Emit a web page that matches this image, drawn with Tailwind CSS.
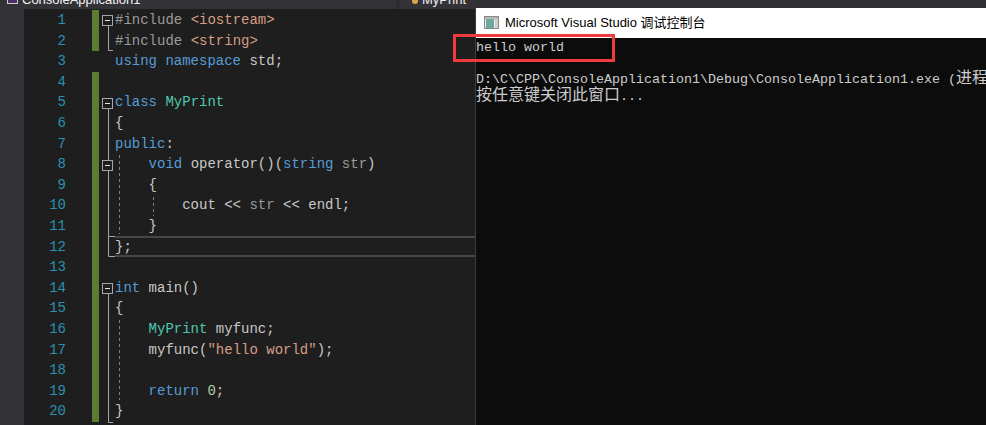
<!DOCTYPE html>
<html lang="zh">
<head>
    <meta charset="UTF-8">
    <title>ConsoleApplication1</title>
    <script src="https://cdn.jsdelivr.net/npm/@tailwindcss/browser@4"></script>
</head>
<body class="bg-[#1e1e1e]">

<div class="w-[986px] h-[425px] overflow-hidden flex bg-[#2f2f32] font-['Liberation_Mono','Noto_Sans_CJK_SC',monospace]">

    <!-- editor -->
    <div class="w-[476px] shrink-0 flex flex-col">
        <!-- cut off combo boxes -->
        <div class="h-[9px] shrink-0 flex overflow-hidden bg-[#2d2d30] text-[#f1f1f1] text-[13px] leading-[16px] font-['Liberation_Sans',sans-serif]">
            <div class="w-[396px] shrink-0 bg-[#333337] pl-[22px] relative">
                <div class="-mt-[8px]">ConsoleApplication1</div>
                <div class="absolute left-[7px] top-0 w-[11px] h-[4px] bg-[#5c2d91]/60 border-b border-x border-[#ccc]"></div>
            </div>
            <div class="w-[4px] shrink-0"></div>
            <div class="flex-1 bg-[#333337] pl-[22px] relative">
                <div class="-mt-[8px]">MyPrint</div>
                <div class="absolute left-[12px] top-0 w-[6px] h-[4px] bg-[#d9a64a] rounded-b-sm"></div>
            </div>
        </div>

        <div class="flex-1 flex min-h-0">
            <div class="w-[24px] shrink-0 bg-[#333337]"></div>

            <div class="flex-1 bg-[#1e1e1e] border-r border-[#3c3c3c] relative text-[14px] leading-[20.6px] pt-[1px]">
                <div class="h-[20.6px] flex"><div class="w-[42px] text-right text-[#2b91af]">1</div><div class="w-[26px] shrink-0"></div><div class="w-[7px] bg-[#5b7d2f] shrink-0"></div><div class="pl-[16px] whitespace-pre"><span class="text-[#9b9b9b]">#include </span><span class="text-[#d69d85]">&lt;iostream&gt;</span></div></div>
                <div class="h-[20.6px] flex"><div class="w-[42px] text-right text-[#2b91af]">2</div><div class="w-[26px] shrink-0"></div><div class="w-[7px] bg-[#5b7d2f] shrink-0"></div><div class="pl-[16px] whitespace-pre"><span class="text-[#9b9b9b]">#include </span><span class="text-[#d69d85]">&lt;string&gt;</span></div></div>
                <div class="h-[20.6px] flex"><div class="w-[42px] text-right text-[#2b91af]">3</div><div class="w-[26px] shrink-0"></div><div class="w-[7px] shrink-0"></div><div class="pl-[16px] whitespace-pre"><span class="text-[#569cd6]">using namespace </span><span class="text-[#c8c8c8]">std;</span></div></div>
                <div class="h-[20.6px] flex"><div class="w-[42px] text-right text-[#2b91af]">4</div><div class="w-[26px] shrink-0"></div><div class="w-[7px] bg-[#5b7d2f] shrink-0"></div></div>
                <div class="h-[20.6px] flex"><div class="w-[42px] text-right text-[#2b91af]">5</div><div class="w-[26px] shrink-0"></div><div class="w-[7px] bg-[#5b7d2f] shrink-0"></div><div class="pl-[16px] whitespace-pre"><span class="text-[#569cd6]">class </span><span class="text-[#4ec9b0]">MyPrint</span></div></div>
                <div class="h-[20.6px] flex"><div class="w-[42px] text-right text-[#2b91af]">6</div><div class="w-[26px] shrink-0"></div><div class="w-[7px] bg-[#5b7d2f] shrink-0"></div><div class="pl-[16px] whitespace-pre text-[#c8c8c8]">{</div></div>
                <div class="h-[20.6px] flex"><div class="w-[42px] text-right text-[#2b91af]">7</div><div class="w-[26px] shrink-0"></div><div class="w-[7px] bg-[#5b7d2f] shrink-0"></div><div class="pl-[16px] whitespace-pre text-[#569cd6]">public<span class="text-[#c8c8c8]">:</span></div></div>
                <div class="h-[20.6px] flex"><div class="w-[42px] text-right text-[#2b91af]">8</div><div class="w-[26px] shrink-0"></div><div class="w-[7px] bg-[#5b7d2f] shrink-0"></div><div class="pl-[16px] whitespace-pre text-[#c8c8c8]">    <span class="text-[#569cd6]">void </span>operator()(<span class="text-[#569cd6]">string </span><span class="text-[#9a9a9a]">str</span>)</div></div>
                <div class="h-[20.6px] flex"><div class="w-[42px] text-right text-[#2b91af]">9</div><div class="w-[26px] shrink-0"></div><div class="w-[7px] bg-[#5b7d2f] shrink-0"></div><div class="pl-[16px] whitespace-pre text-[#c8c8c8]">    {</div></div>
                <div class="h-[20.6px] flex"><div class="w-[42px] text-right text-[#2b91af]">10</div><div class="w-[26px] shrink-0"></div><div class="w-[7px] bg-[#5b7d2f] shrink-0"></div><div class="pl-[16px] whitespace-pre text-[#c8c8c8]">        cout &lt;&lt; <span class="text-[#9a9a9a]">str</span> &lt;&lt; endl;</div></div>
                <div class="h-[20.6px] flex"><div class="w-[42px] text-right text-[#2b91af]">11</div><div class="w-[26px] shrink-0"></div><div class="w-[7px] bg-[#5b7d2f] shrink-0"></div><div class="pl-[16px] whitespace-pre text-[#c8c8c8]">    }</div></div>
                <div class="h-[20.6px] flex"><div class="w-[42px] text-right text-[#2b91af]">12</div><div class="w-[26px] shrink-0"></div><div class="w-[7px] bg-[#5b7d2f] shrink-0"></div><div class="pl-[16px] whitespace-pre text-[#c8c8c8]">};</div></div>
                <div class="h-[20.6px] flex"><div class="w-[42px] text-right text-[#2b91af]">13</div><div class="w-[26px] shrink-0"></div><div class="w-[7px] bg-[#5b7d2f] shrink-0"></div></div>
                <div class="h-[20.6px] flex"><div class="w-[42px] text-right text-[#2b91af]">14</div><div class="w-[26px] shrink-0"></div><div class="w-[7px] bg-[#5b7d2f] shrink-0"></div><div class="pl-[16px] whitespace-pre"><span class="text-[#569cd6]">int </span><span class="text-[#c8c8c8]">main()</span></div></div>
                <div class="h-[20.6px] flex"><div class="w-[42px] text-right text-[#2b91af]">15</div><div class="w-[26px] shrink-0"></div><div class="w-[7px] bg-[#5b7d2f] shrink-0"></div><div class="pl-[16px] whitespace-pre text-[#c8c8c8]">{</div></div>
                <div class="h-[20.6px] flex"><div class="w-[42px] text-right text-[#2b91af]">16</div><div class="w-[26px] shrink-0"></div><div class="w-[7px] bg-[#5b7d2f] shrink-0"></div><div class="pl-[16px] whitespace-pre text-[#c8c8c8]">    <span class="text-[#4ec9b0]">MyPrint </span>myfunc;</div></div>
                <div class="h-[20.6px] flex"><div class="w-[42px] text-right text-[#2b91af]">17</div><div class="w-[26px] shrink-0"></div><div class="w-[7px] bg-[#5b7d2f] shrink-0"></div><div class="pl-[16px] whitespace-pre text-[#c8c8c8]">    myfunc(<span class="text-[#d69d85]">"hello world"</span>);</div></div>
                <div class="h-[20.6px] flex"><div class="w-[42px] text-right text-[#2b91af]">18</div><div class="w-[26px] shrink-0"></div><div class="w-[7px] bg-[#5b7d2f] shrink-0"></div></div>
                <div class="h-[20.6px] flex"><div class="w-[42px] text-right text-[#2b91af]">19</div><div class="w-[26px] shrink-0"></div><div class="w-[7px] bg-[#5b7d2f] shrink-0"></div><div class="pl-[16px] whitespace-pre text-[#c8c8c8]">    <span class="text-[#569cd6]">return </span><span class="text-[#b5cea8]">0</span>;</div></div>
                <div class="h-[20.6px] flex"><div class="w-[42px] text-right text-[#2b91af]">20</div><div class="w-[26px] shrink-0"></div><div class="w-[7px] bg-[#5b7d2f] shrink-0"></div><div class="pl-[16px] whitespace-pre text-[#c8c8c8]">}</div></div>

                <!-- fold margin and current line, drawn over the rows; viewBox uses page coordinates -->
                <svg class="absolute left-0 top-0 pointer-events-none" width="451" height="416" viewBox="24 9 451 416" fill="none">
                    <rect x="115" y="236" width="360" height="2" fill="#464646"/>
                    <rect x="115" y="255" width="360" height="2" fill="#464646"/>
                    <g stroke="#a5a5a5" stroke-width="1">
                        <path d="M108.500 26V50.500H113"/>
                        <path d="M108.500 108V160M108.500 171V256.500H115M108.500 236.500H115"/>
                        <path d="M108.500 294V422.500H113"/>
                        <rect x="102.500" y="15.500" width="10" height="10" fill="#1e1e1e"/>
                        <rect x="102.500" y="98.500" width="10" height="10" fill="#1e1e1e"/>
                        <rect x="102.500" y="160.500" width="10" height="10" fill="#1e1e1e"/>
                        <rect x="102.500" y="283.500" width="10" height="10" fill="#1e1e1e"/>
                        <path d="M105 20.500H110M105 103.500H110M105 165.500H110M105 288.500H110" stroke="#e8e8e8"/>
                    </g>
                    <g stroke="#7f7f7f" stroke-dasharray="3 3">
                        <path d="M119.500 155V234"/>
                        <path d="M153.500 197V216"/>
                        <path d="M119.500 320V400"/>
                    </g>
                </svg>
            </div>
        </div>
    </div>

    <!-- console window -->
    <div class="flex-1 flex flex-col">
        <div class="h-[8px] shrink-0"></div>
        <div class="h-[30px] shrink-0 bg-white flex items-center pl-[8px] gap-[5px] text-[13px] text-black font-['Liberation_Sans','Noto_Sans_CJK_SC',sans-serif]">
            <svg width="16" height="16" viewBox="0 0 16 16">
                <rect x="0.500" y="1.500" width="14" height="12" fill="#e8eef0" stroke="#8a8a8a"/>
                <rect x="1" y="2" width="13" height="2" fill="#b8b8b8"/>
                <rect x="2" y="4" width="8" height="9" fill="#6fa8a0"/>
                <rect x="11" y="4" width="3" height="9" fill="#d0d0d0"/>
            </svg>
            <span>Microsoft Visual Studio 调试控制台</span>
        </div>
        <div class="flex-1 bg-[#0c0c0c] text-[#cccccc] text-[13.33px] leading-[16px] pt-[2px] overflow-hidden">
            <div class="h-[16px] whitespace-pre">hello world</div>
            <div class="h-[15px]"></div>
            <div class="h-[16px] whitespace-pre">D:\C\CPP\ConsoleApplication1\Debug\ConsoleApplication1.exe (<span class="text-[16px]">进程</span></div>
            <div class="h-[16px] mt-[1px] whitespace-pre"><span class="text-[16px]">按任意键关闭此窗口</span>...</div>
        </div>
    </div>

</div>

<!-- red annotation rectangle -->
<div class="absolute left-[453px] top-[34px] w-[162px] h-[28px] border-[3px] border-[#f13a3f]"></div>

</body>
</html>
